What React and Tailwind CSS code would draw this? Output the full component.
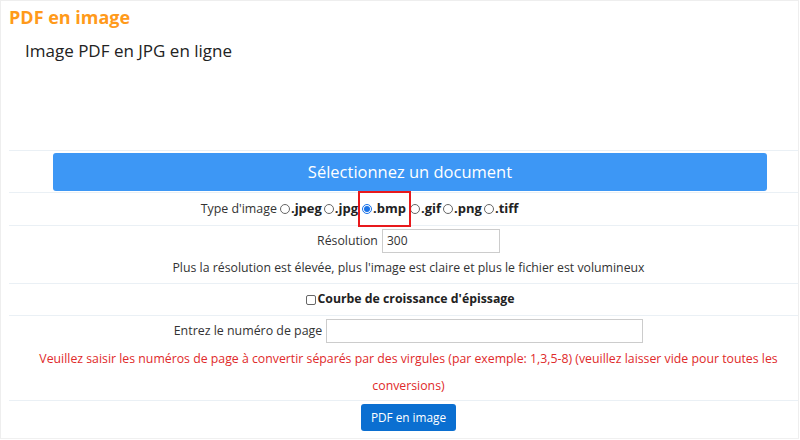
export default function App() {
  const font = { fontFamily: '"Open Sans", "Noto Sans", sans-serif' };
  const Radio = ({ label, checked }) => (
    <span className="flex items-center">
      {checked ? (
        <span className="w-[10px] h-[10px] ml-[2px] rounded-full border border-[#1a73e8] flex items-center justify-center">
          <span className="w-[6px] h-[6px] rounded-full bg-[#1a73e8]" />
        </span>
      ) : (
        <span className="w-[10px] h-[10px] ml-[2px] rounded-full border border-[#666]" />
      )}
      <span className="font-bold text-[13px] text-[#222] ml-[1px]">{label}</span>
    </span>
  );
  return (
    <div className="w-[800px] h-[440px] bg-white overflow-hidden" style={font}>
      <div className="w-[799px] h-[439px] border border-[#eee] border-b-[#f0f0f0]">
        <div className="pl-[8px] pt-[5px] text-[18px] font-bold text-[#ff9a1a] leading-[22px]">PDF en image</div>
        <div className="pl-[24px] pt-[12px] text-[17px] text-[#222] leading-[22px]">Image PDF en JPG en ligne</div>
        <div className="h-[88px]" />
        <div className="ml-[8px] border-t border-[#eaf0f5]">
          <div className="h-[41px] flex items-start pt-[2px] pl-[44px] pr-[31px]">
            <div className="w-full h-[38px] rounded-[3px] bg-[#3d97f5] text-white text-[16.5px] flex items-center justify-center">Sélectionnez un document</div>
          </div>
          <div className="h-[33px] border-t border-[#eaf0f5] flex items-center justify-center pr-[88px] text-[12.4px] text-[#333]">
            <span className="mr-[1px]">Type d'image</span>
            <Radio label=".jpeg" />
            <Radio label=".jpg" />
            <span className="relative ml-[2px]">
              <Radio label=".bmp" checked />
              <span className="absolute left-[-2px] right-[-5px] top-[-8px] bottom-[-8px] border-2 border-[#e8191c]" />
            </span>
            <span className="w-[2px]" />
            <Radio label=".gif" />
            <Radio label=".png" />
            <Radio label=".tiff" />
          </div>
          <div className="h-[58px] border-t border-[#eaf0f5] flex flex-col items-center pl-[10px] text-[12.3px] text-[#333]">
            <div className="flex items-center mt-[3px]">
              <span className="mr-[4px]">Résolution</span>
              <div className="w-[118px] h-[24px] border border-[#ccc] px-[4px] flex items-center text-[12px]">300</div>
            </div>
            <div className="mt-[5px] leading-[20px]">Plus la résolution est élevée, plus l'image est claire et plus le fichier est volumineux</div>
          </div>
          <div className="h-[32px] border-t border-[#eaf0f5] flex items-center justify-center pl-[14px] text-[12.3px] font-bold text-[#222]">
            <span className="w-[10px] h-[10px] border border-[#666] rounded-[2px] mr-[1px]" />
            Courbe de croissance d'épissage
          </div>
          <div className="h-[85px] border-t border-[#eaf0f5] flex flex-col items-center pl-[10px] text-[12.4px]">
            <div className="flex items-center mt-[3px] text-[#333]">
              <span className="mr-[4px]">Entrez le numéro de page</span>
              <div className="w-[317px] h-[24px] border border-[#ccc]" />
            </div>
            <div className="mt-[2px] text-[#e02a2a] text-center leading-[27px] w-[760px] text-[12.3px]">
              Veuillez saisir les numéros de page à convertir séparés par des virgules (par exemple: 1,3,5-8) (veuillez laisser vide pour toutes les conversions)
            </div>
          </div>
          <div className="h-[38px] border-t border-[#eaf0f5] flex justify-center pl-[10px] pt-[3px]">
            <div className="w-[95px] h-[27px] rounded-[3px] bg-[#0b6fd1] text-white text-[11.8px] flex items-center justify-center">PDF en image</div>
          </div>
        </div>
      </div>
    </div>
  );
}
